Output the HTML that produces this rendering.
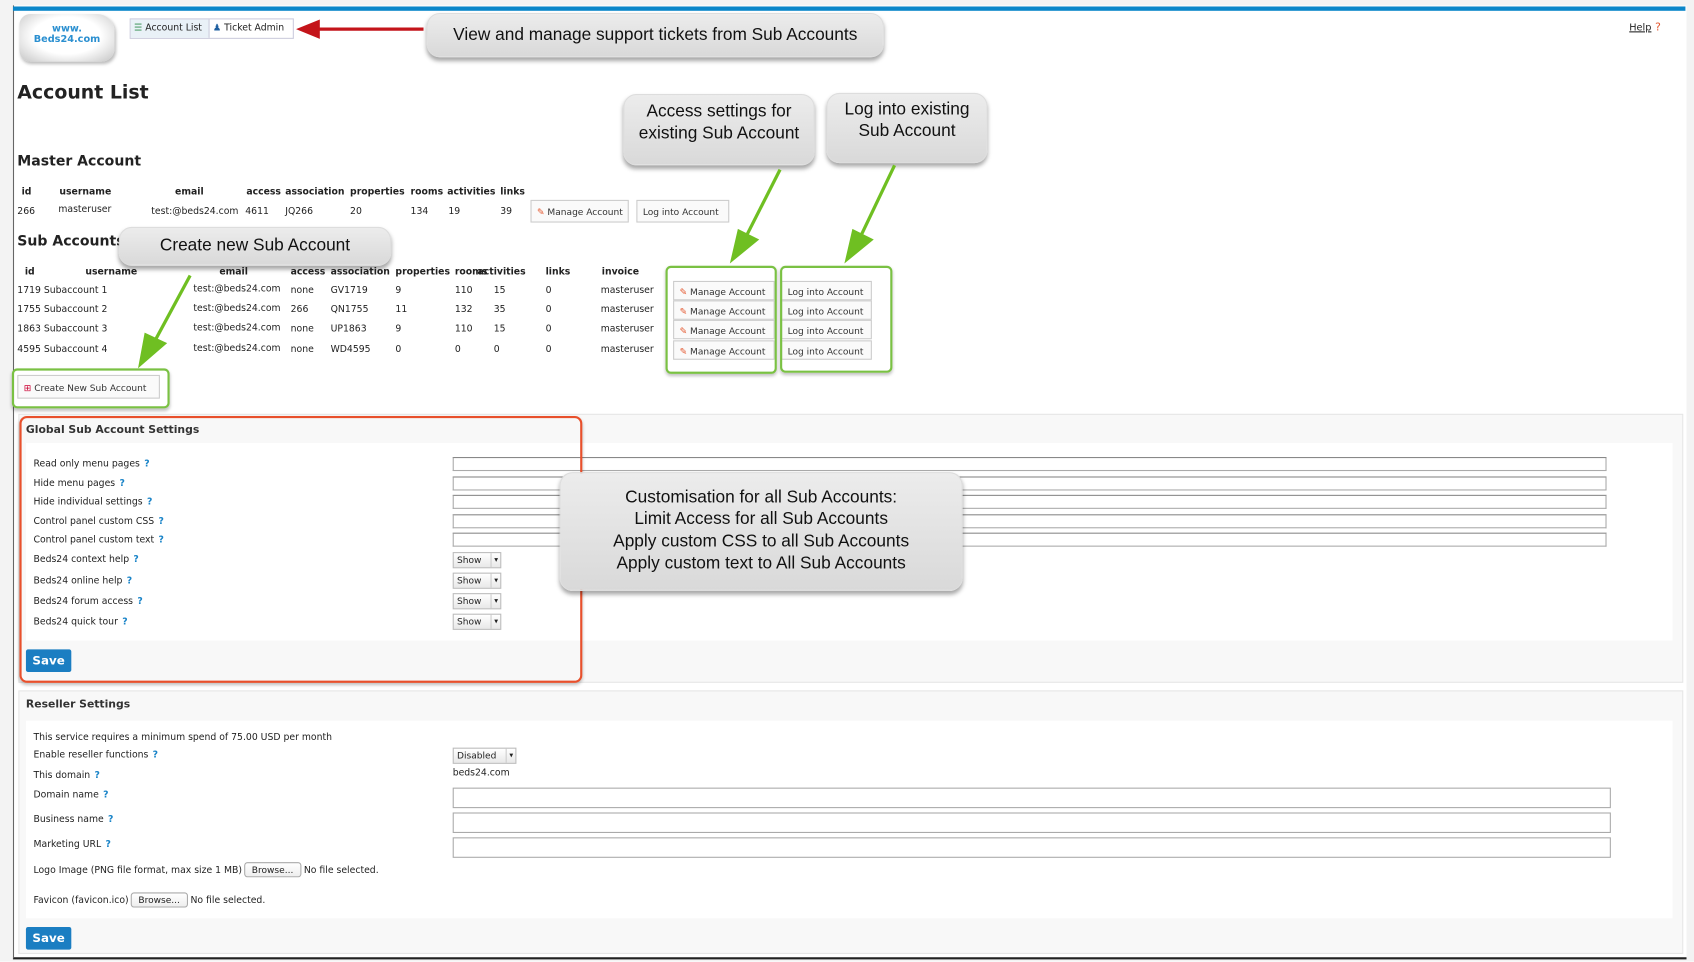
<!DOCTYPE html>
<html><head><meta charset="utf-8"><style>
html,body{margin:0;padding:0;width:1694px;height:962px;overflow:hidden;background:#fff}
#s{position:absolute;left:0;top:0;width:1568px;height:890px;transform:scale(1.0804);transform-origin:0 0;font-family:"DejaVu Sans","Liberation Sans",sans-serif;font-size:8.6px;color:#222}
.a{position:absolute;white-space:nowrap}
.b{font-weight:bold}
.btn{position:absolute;border:1px solid #ccc;background:#fafafa;height:18px;line-height:18px;font-size:8.4px;padding:0 5px;box-sizing:border-box;white-space:nowrap;color:#333}
.pen{color:#e4572e;font-weight:bold}
.co{position:absolute;background:linear-gradient(#ececec,#d9d9d9);border-radius:12px;box-shadow:0 3px 4px rgba(0,0,0,.35);border:1px solid #ddd;font-family:"Liberation Sans",sans-serif;font-size:16px;color:#111;text-align:center;box-sizing:border-box}
.gb{position:absolute;border:2.5px solid #7ac143;border-radius:5px;box-shadow:0 2px 3px rgba(0,0,0,.25)}
.q{color:#1a84c8;font-weight:bold;margin-left:4px}
.ta{position:absolute;left:419px;width:1068px;height:13px;border:1px solid #aaa;border-top-color:#888;background:#fff;box-sizing:border-box}
.sel{position:absolute;left:419px;height:15px;border:1px solid #bbb;background:linear-gradient(#fff,#e8e8e8);font-size:8.4px;line-height:13px;padding-left:3px;box-sizing:border-box}
.sel:after{content:"▾";position:absolute;right:2px;font-size:7px;border-left:1px solid #ccc;padding-left:2px}
.inp{position:absolute;left:419px;width:1072px;height:19px;border:1px solid #aaa;background:#fff;box-sizing:border-box}
.save{position:absolute;left:24px;width:42px;height:21px;background:#1b7ec2;color:#fff;font-weight:bold;font-size:11px;line-height:21px;text-align:center;border-radius:2px}
.br{display:inline-block;border:1px solid #aaa;border-radius:3px;background:linear-gradient(#fff,#eee);padding:1px 6px;font-size:8.4px}
</style></head><body><div id="s">
<div class="a" style="left:0;top:0;width:1568px;height:890px;background:#f3f3f3"></div>
<div class="a" style="left:12px;top:5px;width:1548px;height:881px;background:#fff;border-left:1px solid #666;border-bottom:2px solid #222"></div>
<div class="a" style="left:12px;top:6px;width:1548px;height:4px;background:#0a86c9"></div>

<div class="a" style="left:18px;top:13px;width:88px;height:44px;background:radial-gradient(ellipse at 50% 45%,#fff 50%,#e2e2e2 75%,#c4c4c4);border-radius:10px 16px 12px 10px;box-shadow:1px 2px 3px #bbb"></div>
<div class="a b" style="left:18px;top:22px;width:88px;text-align:center;color:#2a8fd0;font-family:'DejaVu Sans',sans-serif;font-size:9px;line-height:10px">www.<br>Beds24.com</div>

<div class="a" style="left:120px;top:17px;width:152px;height:19px;border:1px solid #ccd;box-sizing:border-box;background:#fff"></div>
<div class="a" style="left:121px;top:18px;width:73px;height:17px;background:#e9f1f7;border-right:1px solid #ccd;line-height:17px;font-size:8.6px;padding-left:3px;box-sizing:border-box"><span style="color:#2a8a4a">☰</span> Account List</div>
<div class="a" style="left:197px;top:18px;line-height:17px;font-size:8.6px"><span style="color:#1e5fa0">♟</span> Ticket Admin</div>

<svg class="a" style="left:270px;top:15px" width="125" height="26"><line x1="122" y1="12" x2="22" y2="12" stroke="#c4141a" stroke-width="3"/><polygon points="4,12 26,3 26,21" fill="#c4141a"/></svg>
<div class="co" style="left:395px;top:12px;width:423px;height:41px;line-height:39px">View and manage support tickets from Sub Accounts</div>

<div class="a" style="left:1508px;top:21px;font-size:9px;text-decoration:underline">Help</div>
<div class="a" style="left:1532px;top:20px;color:#e4572e;font-size:10px">?</div>

<div class="a b" style="left:16px;top:76px;font-size:17.5px">Account List</div>

<div class="co" style="left:577px;top:87px;width:177px;height:66px;padding-top:6px;line-height:20px">Access settings for<br>existing Sub Account</div>
<div class="co" style="left:765px;top:86px;width:149px;height:65px;padding-top:5px;line-height:20px">Log into existing<br>Sub Account</div>

<div class="a b" style="left:16px;top:142px;font-size:13px">Master Account</div>
<div class="a b" style="top:173px;left:0">
<span class="a" style="left:20px">id</span><span class="a" style="left:55px">username</span><span class="a" style="left:162px">email</span><span class="a" style="left:228px">access</span><span class="a" style="left:264px">association</span><span class="a" style="left:324px">properties</span><span class="a" style="left:380px">rooms</span><span class="a" style="left:414px">activities</span><span class="a" style="left:463px">links</span></div>
<div class="a" style="top:191px;left:0">
<span class="a" style="left:16px">266</span><span class="a" style="left:54px;top:-2px">masteruser</span><span class="a" style="left:140px">test:@beds24.com</span><span class="a" style="left:227px">4611</span><span class="a" style="left:264px">JQ266</span><span class="a" style="left:324px">20</span><span class="a" style="left:380px">134</span><span class="a" style="left:415px">19</span><span class="a" style="left:463px">39</span></div>
<div class="btn" style="left:491px;top:185px;height:21px;line-height:21px"><span class="pen">✎</span> Manage Account</div>
<div class="btn" style="left:589px;top:185px;height:21px;line-height:21px;width:86px">Log into Account</div>

<div class="a b" style="left:16px;top:216px;font-size:13px">Sub Accounts</div>
<div class="co" style="left:110px;top:210px;width:252px;height:36px;line-height:34px">Create new Sub Account</div>

<div class="a b" style="top:247px;left:0">
<span class="a" style="left:23px">id</span><span class="a" style="left:79px">username</span><span class="a" style="left:203px">email</span><span class="a" style="left:269px">access</span><span class="a" style="left:306px">association</span><span class="a" style="left:366px">properties</span><span class="a" style="left:421px">rooms</span><span class="a" style="left:442px">activities</span><span class="a" style="left:505px">links</span><span class="a" style="left:557px">invoice</span></div>

<div class="a" style="top:264px;left:0"><span class="a" style="left:16px">1719 Subaccount 1</span><span class="a" style="left:179px;top:-1px">test:@beds24.com</span><span class="a" style="left:269px">none</span><span class="a" style="left:306px">GV1719</span><span class="a" style="left:366px">9</span><span class="a" style="left:421px">110</span><span class="a" style="left:457px">15</span><span class="a" style="left:505px">0</span><span class="a" style="left:556px">masteruser</span></div>
<div class="a" style="top:282px;left:0"><span class="a" style="left:16px">1755 Subaccount 2</span><span class="a" style="left:179px;top:-1px">test:@beds24.com</span><span class="a" style="left:269px">266</span><span class="a" style="left:306px">QN1755</span><span class="a" style="left:366px">11</span><span class="a" style="left:421px">132</span><span class="a" style="left:457px">35</span><span class="a" style="left:505px">0</span><span class="a" style="left:556px">masteruser</span></div>
<div class="a" style="top:300px;left:0"><span class="a" style="left:16px">1863 Subaccount 3</span><span class="a" style="left:179px;top:-1px">test:@beds24.com</span><span class="a" style="left:269px">none</span><span class="a" style="left:306px">UP1863</span><span class="a" style="left:366px">9</span><span class="a" style="left:421px">110</span><span class="a" style="left:457px">15</span><span class="a" style="left:505px">0</span><span class="a" style="left:556px">masteruser</span></div>
<div class="a" style="top:319px;left:0"><span class="a" style="left:16px">4595 Subaccount 4</span><span class="a" style="left:179px;top:-1px">test:@beds24.com</span><span class="a" style="left:269px">none</span><span class="a" style="left:306px">WD4595</span><span class="a" style="left:366px">0</span><span class="a" style="left:421px">0</span><span class="a" style="left:457px">0</span><span class="a" style="left:505px">0</span><span class="a" style="left:556px">masteruser</span></div>

<div class="btn" style="left:623px;top:260px;width:94px"><span class="pen">✎</span> Manage Account</div>
<div class="btn" style="left:623px;top:278px;width:94px"><span class="pen">✎</span> Manage Account</div>
<div class="btn" style="left:623px;top:296px;width:94px"><span class="pen">✎</span> Manage Account</div>
<div class="btn" style="left:623px;top:315px;width:94px"><span class="pen">✎</span> Manage Account</div>
<div class="btn" style="left:723px;top:260px;width:84px">Log into Account</div>
<div class="btn" style="left:723px;top:278px;width:84px">Log into Account</div>
<div class="btn" style="left:723px;top:296px;width:84px">Log into Account</div>
<div class="btn" style="left:723px;top:315px;width:84px">Log into Account</div>

<div class="gb" style="left:616px;top:246px;width:99px;height:96px"></div>
<div class="gb" style="left:722px;top:246px;width:100px;height:95px"></div>
<div class="gb" style="left:11px;top:341px;width:142px;height:33px"></div>
<div class="btn" style="left:16px;top:347px;height:22px;line-height:22px;width:132px"><span style="color:#c03">⊞</span> Create New Sub Account</div>

<svg class="a" style="left:0;top:0" width="900" height="350">
<g stroke="#6fbf22" stroke-width="3" fill="#6fbf22">
<line x1="722" y1="157" x2="690" y2="220"/><polygon points="678,240 684,214 700,222"/>
<line x1="828" y1="153" x2="796" y2="220"/><polygon points="784,240 790,214 806,222"/>
<line x1="176" y1="255" x2="142" y2="318"/><polygon points="130,337 135,310 152,318"/>
</g></svg>

<div class="a" style="left:17px;top:383px;width:1539px;height:247px;background:#f8f8f8;border:1px solid #e6e6e6"></div>
<div class="a" style="left:24px;top:410px;width:1524px;height:183px;background:#fff"></div>
<div class="a b" style="left:24px;top:393px;font-size:10px;color:#333">Global Sub Account Settings</div>
<div class="a" style="left:31px;top:425px">Read only menu pages<span class="q">?</span></div>
<div class="a" style="left:31px;top:443px">Hide menu pages<span class="q">?</span></div>
<div class="a" style="left:31px;top:460px">Hide individual settings<span class="q">?</span></div>
<div class="a" style="left:31px;top:478px">Control panel custom CSS<span class="q">?</span></div>
<div class="a" style="left:31px;top:495px">Control panel custom text<span class="q">?</span></div>
<div class="a" style="left:31px;top:513px">Beds24 context help<span class="q">?</span></div>
<div class="a" style="left:31px;top:533px">Beds24 online help<span class="q">?</span></div>
<div class="a" style="left:31px;top:552px">Beds24 forum access<span class="q">?</span></div>
<div class="a" style="left:31px;top:571px">Beds24 quick tour<span class="q">?</span></div>
<div class="ta" style="top:423px"></div><div class="ta" style="top:441px"></div><div class="ta" style="top:458px"></div><div class="ta" style="top:476px"></div><div class="ta" style="top:493px"></div>
<div class="sel" style="top:511px;width:45px">Show</div>
<div class="sel" style="top:530px;width:45px">Show</div>
<div class="sel" style="top:549px;width:45px">Show</div>
<div class="sel" style="top:568px;width:45px">Show</div>
<div class="save" style="top:601px">Save</div>
<div class="a" style="left:18px;top:385px;width:521px;height:247px;border:2px solid #e8502c;border-radius:7px;box-sizing:border-box;box-shadow:0 2px 3px rgba(0,0,0,.25)"></div>
<div class="co" style="left:518px;top:437px;width:373px;height:110px;padding-top:13px;line-height:20.4px">Customisation for all Sub Accounts:<br>Limit Access for all Sub Accounts<br>Apply custom CSS to all Sub Accounts<br>Apply custom text to All Sub Accounts</div>

<div class="a" style="left:17px;top:639px;width:1539px;height:242px;background:#f8f8f8;border:1px solid #e6e6e6"></div>
<div class="a" style="left:24px;top:667px;width:1524px;height:183px;background:#fff"></div>
<div class="a b" style="left:24px;top:647px;font-size:10px;color:#333">Reseller Settings</div>
<div class="a" style="left:31px;top:678px">This service requires a minimum spend of 75.00 USD per month</div>
<div class="a" style="left:31px;top:694px">Enable reseller functions<span class="q">?</span></div>
<div class="sel" style="top:692px;width:59px">Disabled</div>
<div class="a" style="left:31px;top:713px">This domain<span class="q">?</span></div>
<div class="a" style="left:419px;top:711px">beds24.com</div>
<div class="a" style="left:31px;top:731px">Domain name<span class="q">?</span></div>
<div class="inp" style="top:729px"></div>
<div class="a" style="left:31px;top:754px">Business name<span class="q">?</span></div>
<div class="inp" style="top:752px"></div>
<div class="a" style="left:31px;top:777px">Marketing URL<span class="q">?</span></div>
<div class="inp" style="top:775px"></div>
<div class="a" style="left:31px;top:798px">Logo Image (PNG file format, max size 1 MB)<span class="br" style="margin-left:2px">Browse...</span> No file selected.</div>
<div class="a" style="left:31px;top:826px">Favicon (favicon.ico)<span class="br" style="margin-left:2px">Browse...</span> No file selected.</div>
<div class="save" style="top:858px">Save</div>
</div></body></html>
